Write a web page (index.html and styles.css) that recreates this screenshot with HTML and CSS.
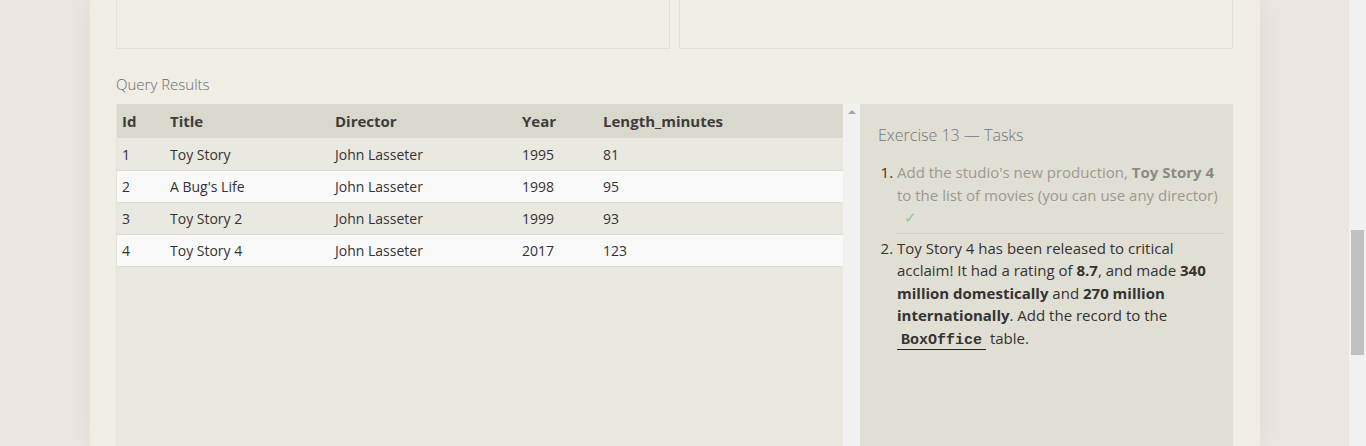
FILE: index.html
```html
<!DOCTYPE html>
<html lang="en">
<head>
<meta charset="utf-8">
<title>SQL Exercise 13</title>
<link rel="stylesheet" href="styles.css">
</head>
<body>
<div class="page">
  <div class="main">
    <div class="card">
      <div class="top-panels">
        <div class="panel"></div>
        <div class="panel"></div>
      </div>
      <div class="label">Query Results</div>
      <div class="results">
        <div class="table-wrap">
          <table class="results-table">
            <thead>
              <tr>
                <th class="c-id">Id</th>
                <th class="c-title">Title</th>
                <th class="c-dir">Director</th>
                <th class="c-year">Year</th>
                <th class="c-len">Length_minutes</th>
              </tr>
            </thead>
            <tbody>
              <tr><td>1</td><td>Toy Story</td><td>John Lasseter</td><td>1995</td><td>81</td></tr>
              <tr><td>2</td><td>A Bug's Life</td><td>John Lasseter</td><td>1998</td><td>95</td></tr>
              <tr><td>3</td><td>Toy Story 2</td><td>John Lasseter</td><td>1999</td><td>93</td></tr>
              <tr><td>4</td><td>Toy Story 4</td><td>John Lasseter</td><td>2017</td><td>123</td></tr>
            </tbody>
          </table>
        </div>
        <div class="inner-scroll">
          <span class="arrow-up"></span>
        </div>
        <div class="tasks">
          <div class="tasks-title">Exercise 13 — Tasks</div>
          <ol class="task-list">
            <li class="done"><span class="task-text">Add the studio's new production, <b>Toy Story 4</b><br>to the list of movies (you can use any director)<br><span class="check">✓</span></span></li>
            <li><span class="task-text">Toy Story 4 has been released to critical<br>acclaim! It had a rating of <b>8.7</b>, and made <b>340</b><br><b>million domestically</b> and <b>270 million</b><br><b>internationally</b>. Add the record to the<br><code>BoxOffice</code> table.</span></li>
          </ol>
        </div>
      </div>
    </div>
  </div>
  <div class="page-scroll">
    <div class="thumb"></div>
  </div>
</div>
</body>
</html>
```

FILE: styles.css
```css
* { box-sizing: border-box; }

html, body {
  margin: 0;
  padding: 0;
  height: 446px;
  overflow: hidden;
}

body {
  background: #ebe6e2;
  font-family: "Open Sans", "Noto Sans", sans-serif;
  color: #333;
}

.page {
  display: flex;
  height: 446px;
}

.main {
  flex: 1;
  display: flex;
  padding-left: 90px;
}

.card {
  width: 1170px;
  height: 446px;
  background: #f0ede5;
  padding: 0 27px 0 26px;
  box-shadow: 0 0 26px rgba(60, 40, 30, 0.07);
  display: flex;
  flex-direction: column;
}

.top-panels {
  display: grid;
  grid-template-columns: 554px 554px;
  column-gap: 9px;
  height: 49px;
}

.panel {
  border: 1px solid #e3e0d7;
  border-top: none;
  background: #f0ede5;
}

.label {
  margin-top: 25px;
  margin-bottom: 10px;
  font-size: 15px;
  line-height: 20px;
  font-weight: 300;
  color: #6a6a6a;
}

.results {
  flex: 1;
  display: flex;
  min-height: 0;
}

.table-wrap {
  width: 727px;
  background: #eae9e1;
  border-left: 1px solid #e4e3da;
}

.results-table {
  width: 100%;
  border-collapse: collapse;
  font-size: 14px;
}

.results-table th {
  background: #d9d8cc;
  height: 34px;
  padding: 0 0 0 5px;
  text-align: left;
  font-weight: 700;
  font-size: 15px;
  color: #3d3d3d;
}

.results-table td {
  height: 32px;
  padding: 1px 0 0 5px;
  border-bottom: 1px solid #dcdcd6;
  color: #333;
}

.results-table tbody tr:nth-child(odd) { background: #eae9e1; }
.results-table tbody tr:nth-child(even) { background: #f9f9f9; }

.c-id { width: 48px; }
.c-title { width: 165px; }
.c-dir { width: 187px; }
.c-year { width: 81px; }

.inner-scroll {
  width: 17px;
  background: #f1f1f1;
  display: flex;
  justify-content: center;
  padding-top: 6px;
}

.arrow-up {
  width: 0;
  height: 0;
  border-left: 4px solid transparent;
  border-right: 4px solid transparent;
  border-bottom: 4px solid #a3a3a3;
}

.tasks {
  width: 373px;
  background: #e1dfd3;
  padding: 20px 8px 0 18px;
}

.tasks-title {
  font-size: 16px;
  line-height: 22px;
  font-weight: 300;
  color: #6f7684;
}

.task-list {
  margin: 15px 0 0 0;
  padding-left: 19px;
  font-size: 15px;
  line-height: 22.5px;
  color: #333;
  white-space: nowrap;
}

.task-list li.done {
  padding-bottom: 4px;
  border-bottom: 1px solid #d3d1c5;
}

.task-list li.done .task-text {
  color: #9a9a94;
}

.task-list li.done b {
  color: #8a8a85;
}

.task-list li + li {
  padding-top: 3px;
}

.check {
  color: #8cc79a;
  margin-left: 7px;
}

code {
  font-family: "Liberation Mono", "DejaVu Sans Mono", monospace;
  font-weight: 700;
  font-size: 15px;
  padding: 0 4px;
  border-bottom: 1px solid #222;
  color: #333;
}

.page-scroll {
  width: 17px;
  background: #f1f1f1;
  padding-top: 230px;
  display: flex;
  justify-content: center;
}

.thumb {
  width: 13px;
  height: 125px;
  background: #c1c1c1;
}
```
